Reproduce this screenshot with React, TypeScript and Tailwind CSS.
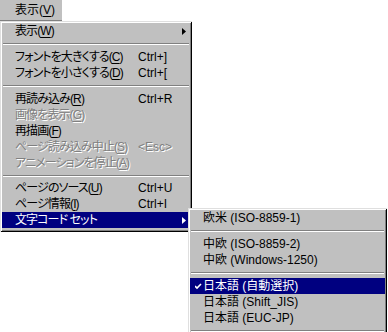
import React from "react";

type Item =
  | { sep: true; h?: number }
  | {
      sep?: false;
      label: string;
      key?: string;
      shortcut?: string;
      disabled?: boolean;
      active?: boolean;
      sub?: boolean;
      checked?: boolean;
    };

const FONT = "font-['Liberation_Sans','Noto_Sans_CJK_JP',sans-serif]";
const BEVEL =
  "shadow-[inset_1px_1px_0_#dfdfdf,inset_-1px_-1px_0_#000,inset_2px_2px_0_#fff,inset_-2px_-2px_0_#808080]";

// label with underlined mnemonic, e.g. "表示(W)" -> 表示(<u>W</u>)
const Label = ({ text, mk }: { text: string; mk?: string }) => {
  if (!mk) return <>{text}</>;
  const i = text.lastIndexOf("(" + mk + ")");
  if (i < 0) return <>{text}</>;
  return (
    <>
      {text.slice(0, i)}(<u className="underline-offset-2">{mk}</u>)
    </>
  );
};

const Arrow = ({ white }: { white?: boolean }) => (
  <svg width="4" height="7" viewBox="0 0 4 7" className="shrink-0">
    <path d="M0 0 L4 3.5 L0 7 Z" fill={white ? "#fff" : "#000"} />
  </svg>
);

const Check = () => (
  <svg width="7" height="7" viewBox="0 0 7 7">
    <path d="M0 3 L2 5 L6 1" stroke="#fff" strokeWidth="1.6" fill="none" />
  </svg>
);

const mainItems: Item[] = [
  { label: "表示(W)", key: "W", sub: true },
  { sep: true },
  { label: "フォントを大きくする(C)", key: "C", shortcut: "Ctrl+]" },
  { label: "フォントを小さくする(D)", key: "D", shortcut: "Ctrl+[" },
  { sep: true },
  { label: "再読み込み(R)", key: "R", shortcut: "Ctrl+R" },
  { label: "画像を表示(G)", key: "G", disabled: true },
  { label: "再描画(F)", key: "F" },
  { label: "ページ読み込み中止(S)", key: "S", shortcut: "<Esc>", disabled: true },
  { label: "アニメーションを停止(A)", key: "A", disabled: true },
  { sep: true, h: 9 },
  { label: "ページのソース(U)", key: "U", shortcut: "Ctrl+U" },
  { label: "ページ情報(I)", key: "I", shortcut: "Ctrl+I" },
  { label: "文字コード セット", sub: true, active: true },
];

const subItems: Item[] = [
  { label: "欧米 (ISO-8859-1)" },
  { sep: true },
  { label: "中欧 (ISO-8859-2)" },
  { label: "中欧 (Windows-1250)" },
  { sep: true },
  { label: "日本語 (自動選択)", active: true, checked: true },
  { label: "日本語 (Shift_JIS)" },
  { label: "日本語 (EUC-JP)" },
  { sep: true },
];

const Separator = ({ h = 10 }: { h?: number }) => (
  <div style={{ height: h }} className="flex items-center px-[1px]">
    <div className="w-full h-[2px] border-t border-t-[#808080] border-b border-b-white" />
  </div>
);

const Row = ({
  it,
  labelW,
  tight,
}: {
  it: Exclude<Item, { sep: true }>;
  labelW?: number;
  tight?: boolean;
}) => {
  const color = it.active ? "bg-[#000080] text-white" : it.disabled ? "text-[#808080]" : "text-black";
  const emboss = it.disabled ? "[text-shadow:1px_1px_0_#fff]" : "";
  return (
    <div className={`relative flex items-center h-[16px] leading-[16px] whitespace-nowrap ${color} ${emboss}`}>
      {it.checked && (
        <span className="absolute left-[5px] top-[5px] flex">
          <Check />
        </span>
      )}
      <span
        className={`pl-[13px] shrink-0 ${tight ? "tracking-[-0.9px]" : ""}`}
        style={labelW ? { width: labelW } : undefined}
      >
        <Label text={it.label} mk={it.key} />
      </span>
      {it.shortcut && <span className="shrink-0">{it.shortcut}</span>}
      {it.sub && (
        <span className="ml-auto pr-[4px] flex">
          <Arrow white={it.active} />
        </span>
      )}
    </div>
  );
};

export default function App() {
  return (
    <div
      className={`relative w-[388px] h-[332px] bg-white overflow-hidden text-[12px] [font-feature-settings:'palt'] ${FONT}`}
    >
      {/* menu bar button */}
      <div className="w-[62px] h-[21px] bg-[#c0c0c0] border-b border-b-[#808080] pl-[15px] leading-[20px] text-black">
        <Label text="表示(V)" mk="V" />
      </div>

      {/* main menu */}
      <div className={`absolute left-0 top-[21px] w-[192px] h-[211px] bg-[#c0c0c0] p-[2px] ${BEVEL}`}>
        {mainItems.map((it, i) =>
          it.sep ? <Separator key={i} h={it.h} /> : <Row key={i} it={it} labelW={136} tight />
        )}
      </div>

      {/* submenu */}
      <div className={`absolute left-[188px] top-[208px] w-[199px] h-[140px] bg-[#c0c0c0] p-[2px] ${BEVEL}`}>
        {subItems.map((it, i) => (it.sep ? <Separator key={i} /> : <Row key={i} it={it} />))}
      </div>
    </div>
  );
}
